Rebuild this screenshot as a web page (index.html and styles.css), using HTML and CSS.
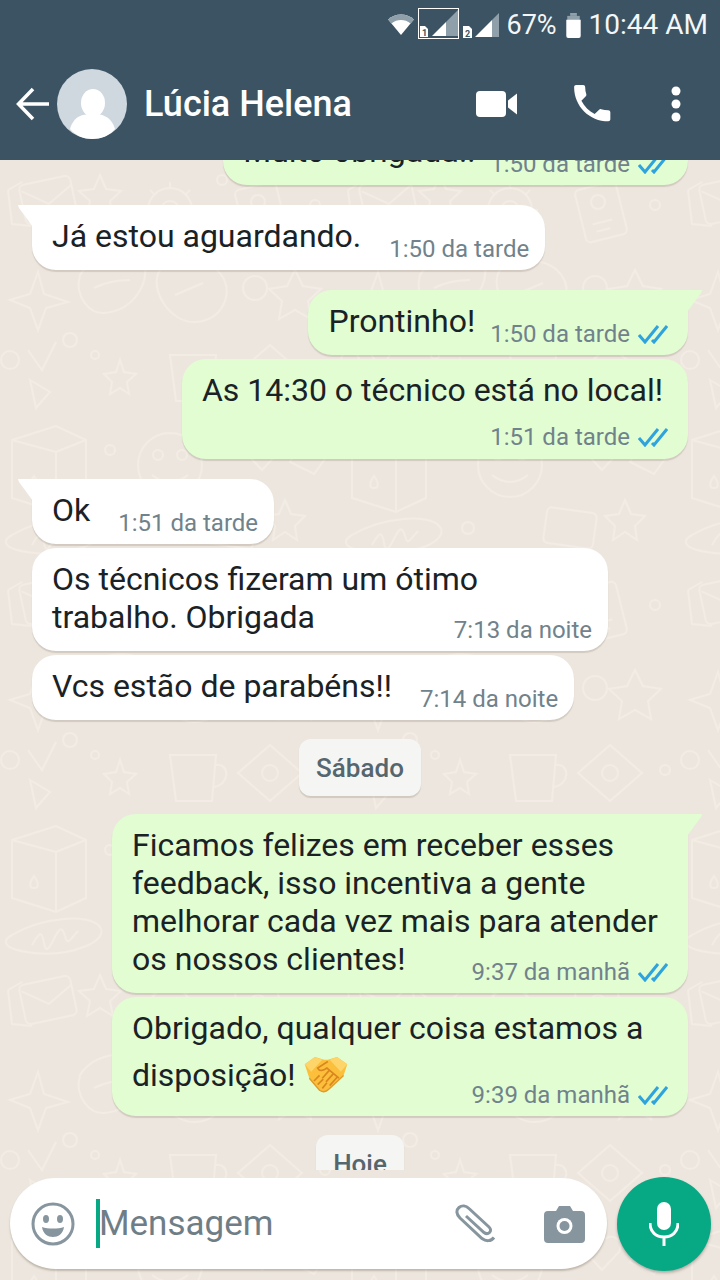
FILE: index.html
```html
<!DOCTYPE html>
<html>
<head lang="en">
    <meta charset="UTF-8">
    <title>Lúcia Helena</title>
    <link rel="stylesheet" href="styles.css">
</head>
<body>
<div class="app">
    <header class="top">
        <div class="status">
            <svg class="st-wifi" width="28" height="22" viewBox="0 0 30 24"><path d="M1 7C9 0 21 0 29 7L15 24Z" fill="#fff"/><path d="M1 7C9 0 21 0 29 7L25.500 11.500C19 6.500 11 6.500 4.500 11.500Z" fill="#8fa0aa"/></svg>
            <div class="sim-box">
                <svg width="39" height="29" viewBox="0 0 39 29"><path d="M1 17h5l3 3v8H1Z" fill="#fff"/><text x="3" y="27" class="sim-num">1</text><path d="M13 27L27 13V27Z" fill="#fff"/><path d="M27 13L39 1V27H27Z" fill="#8fa0aa"/></svg>
            </div>
            <svg class="st-sim2" width="36" height="25" viewBox="0 0 36 25"><path d="M0 13h6l3 3v9H0Z" fill="#fff"/><text x="2" y="24" class="sim-num">2</text><path d="M12 24L29 7V24Z" fill="#fff"/><path d="M29 7L36 0V24H29Z" fill="#8fa0aa"/></svg>
            <span class="st-text pct">67%</span>
            <svg class="st-batt" width="15" height="25" viewBox="0 0 15 26"><path d="M4 0h7v3H4Z" fill="#8fa0aa"/><path d="M1 3h13v5H1Z" fill="#8fa0aa"/><path d="M0 7h15v17a2 2 0 0 1-2 2H2a2 2 0 0 1-2-2Z" fill="#fff"/></svg>
            <span class="st-text">10:44 AM</span>
        </div>
        <div class="bar">
            <svg class="back" width="34" height="34" viewBox="0 0 34 34"><path d="M33 17H3M17 2L2.500 17L17 32" fill="none" stroke="#fff" stroke-width="3.500"/></svg>
            <div class="avatar">
                <svg width="70" height="70" viewBox="0 0 70 70"><circle cx="35" cy="35" r="35" fill="#cfd8df"/><ellipse cx="36" cy="34" rx="12" ry="14" fill="#fff"/><path d="M13 60C17 46 27 45 36 45C45 45 54 47 58 60C52 67 44 70 35 70C27 70 19 67 13 60Z" fill="#fff"/></svg>
            </div>
            <div class="name">Lúcia Helena</div>
            <div class="actions">
                <svg width="42" height="28" viewBox="0 0 42 28"><rect x="0" y="1" width="30" height="26" rx="4" fill="#fff"/><path d="M32 10.500L41 3.500V24.500L32 17.500Z" fill="#fff"/></svg>
                <svg width="46" height="46" viewBox="0 0 24 24"><path d="M6.620 10.790c1.440 2.830 3.760 5.140 6.590 6.590l2.200-2.200c.27-.27.670-.36 1.020-.24 1.120.37 2.330.57 3.570.57.550 0 1 .45 1 1V20c0 .55-.45 1-1 1-9.390 0-17-7.610-17-17 0-.55.45-1 1-1h3.500c.55 0 1 .45 1 1 0 1.250.2 2.450.57 3.570.11.350.03.740-.25 1.020z" fill="#fff" transform="translate(-1 -1) scale(1.050)"/></svg>
                <svg width="12" height="36" viewBox="0 0 12 36"><circle cx="6" cy="5" r="4.500" fill="#fff"/><circle cx="6" cy="18" r="4.500" fill="#fff"/><circle cx="6" cy="31" r="4.500" fill="#fff"/></svg>
            </div>
        </div>
    </header>

    <div class="chat">
        <svg class="doodles" width="720" height="1120">
            <defs>
                <pattern id="dood" width="340" height="400" patternUnits="userSpaceOnUse">
                    <g fill="none" stroke="#f2ece5" stroke-width="2">
                        <!-- envelope -->
                        <rect x="22" y="20" width="52" height="40" rx="5" transform="rotate(-12 48 40)"/>
                        <path d="M24 26l24 18 26-14" transform="rotate(-12 48 40)"/>
                        <path d="M8 30l14-8M8 30l4 34 20 2"/>
                        <!-- star, gear, dots -->
                        <path d="M100 15l6 14 15 2-11 10 3 15-13-8-13 8 3-15-11-10 15-2z"/>
                        <circle cx="170" cy="50" r="22"/>
                        <circle cx="170" cy="50" r="9"/>
                        <path d="M170 22v6M170 72v6M142 50h6M192 50h6M150 30l4 4M186 66l4 4M150 70l4-4M186 34l4-4"/>
                        <circle cx="222" cy="20" r="5"/>
                        <circle cx="132" cy="78" r="4"/>
                        <!-- note -->
                        <rect x="240" y="25" width="42" height="54" rx="5" transform="rotate(-14 261 52)"/>
                        <circle cx="258" cy="42" r="7"/>
                        <path d="M250 62h20M252 70h14" transform="rotate(-14 261 52)"/>
                        <circle cx="315" cy="45" r="5"/>
                        <!-- leaf / cloud -->
                        <path d="M80 115c14-22 48-26 64-14 6 24-12 50-40 52-14 1-30-16-24-38z"/>
                        <path d="M94 128c12-6 24-8 36-8"/>
                        <path d="M160 110c20-14 50-12 62 6s0 44-26 46-48-34-36-52z"/>
                        <path d="M175 135l28-12"/>
                        <!-- plane star -->
                        <path d="M38 112l6 22 24 8-22 6-8 22-8-22-20-8 20-6z"/>
                        <circle cx="255" cy="128" r="12"/>
                        <path d="M295 110l8 16 18 3-13 12 3 18-16-9-16 9 3-18-13-12 18-3z"/>
                        <!-- small -->
                        <circle cx="10" cy="200" r="9"/>
                        <path d="M28 190l14 20 14-28M30 220l20 12-14 16z"/>
                        <circle cx="70" cy="180" r="7"/>
                        <circle cx="95" cy="195" r="4"/>
                        <path d="M120 200l4 12 12 2-9 8 2 12-9-6-10 6 2-12-8-8 12-2z"/>
                        <!-- cup -->
                        <path d="M170 195h46l-4 46h-36z"/>
                        <path d="M216 205c14-2 14 20-2 22"/>
                        <!-- diamond -->
                        <path d="M270 185l32 28-32 28-32-28z"/>
                        <circle cx="270" cy="213" r="8"/>
                        <circle cx="325" cy="210" r="5"/>
                        <!-- box -->
                        <path d="M12 280l44-14 30 14v58l-30 14-44-14zM12 280l44 12 30-12M56 292v60"/>
                        <path d="M34 316c-5 7-5 12 0 12s5-5 0-12z"/>
                        <circle cx="110" cy="290" r="5"/>
                        <!-- face -->
                        <circle cx="170" cy="305" r="32"/>
                        <circle cx="158" cy="295" r="5"/>
                        <circle cx="182" cy="295" r="5"/>
                        <path d="M152 315q18 14 36 0"/>
                        <!-- heart -->
                        <path d="M262 282c-7-11-24-3-17 10l17 18 17-18c7-13-10-21-17-10z"/>
                        <path d="M306 270l24 22-16 22-24-12z"/>
                        <!-- scribble -->
                        <path d="M12 375c30-18 78-22 88-8s-30 30-66 26-30-14-22-18z"/>
                        <path d="M32 385c8-14 10-14 12-2s6 4 12-8 8-2 10 4 6-2 12-8"/>
                        <circle cx="128" cy="368" r="6"/>
                        <rect x="205" y="350" width="50" height="36" rx="5" transform="rotate(8 230 368)"/>
                        <path d="M285 340l6 14 14 2-10 10 2 14-12-8-12 8 2-14-10-10 14-2z"/>
                    </g>
                </pattern>
            </defs>
            <rect width="720" height="1120" fill="url(#dood)"/>
        </svg>

        <div class="messages">
            <div class="msg sent">
                <div class="row">
                    <div class="txt">Muito obrigada!!</div>
                    <div class="meta">1:50 da tarde <svg class="ticks" width="30" height="20" viewBox="0 0 30 20"><path d="M1 11l6 7L20 2M14 16l2 2L29 2" fill="none" stroke="#2fa3dd" stroke-width="3"/></svg></div>
                </div>
            </div>

            <div class="msg recv tail group">
                <div class="row">
                    <div class="txt">Já estou aguardando.</div>
                    <div class="meta">1:50 da tarde</div>
                </div>
            </div>

            <div class="msg sent tail group">
                <div class="row">
                    <div class="txt">Prontinho!</div>
                    <div class="meta">1:50 da tarde <svg class="ticks" width="30" height="20" viewBox="0 0 30 20"><path d="M1 11l6 7L20 2M14 16l2 2L29 2" fill="none" stroke="#2fa3dd" stroke-width="3"/></svg></div>
                </div>
            </div>
            <div class="msg sent roomy">
                <div class="txt">As 14:30 o técnico está no local!</div>
                <div class="meta below">1:51 da tarde <svg class="ticks" width="30" height="20" viewBox="0 0 30 20"><path d="M1 11l6 7L20 2M14 16l2 2L29 2" fill="none" stroke="#2fa3dd" stroke-width="3"/></svg></div>
            </div>

            <div class="msg recv tail group">
                <div class="row">
                    <div class="txt">Ok</div>
                    <div class="meta">1:51 da tarde</div>
                </div>
            </div>
            <div class="msg recv">
                <div class="txt">Os técnicos fizeram um ótimo trabalho. Obrigada<span class="meta over">7:13 da noite</span></div>
            </div>
            <div class="msg recv">
                <div class="row">
                    <div class="txt">Vcs estão de parabéns!!</div>
                    <div class="meta">7:14 da noite</div>
                </div>
            </div>

            <div class="date">Sábado</div>

            <div class="msg sent tail">
                <div class="txt">Ficamos felizes em receber esses feedback, isso incentiva a gente melhorar cada vez mais para atender os nossos clientes!<span class="meta over">9:37 da manhã <svg class="ticks" width="30" height="20" viewBox="0 0 30 20"><path d="M1 11l6 7L20 2M14 16l2 2L29 2" fill="none" stroke="#2fa3dd" stroke-width="3"/></svg></span></div>
            </div>
            <div class="msg sent">
                <div class="txt">Obrigado, qualquer coisa estamos a disposição! <svg class="shake" width="46" height="37" viewBox="0 0 48 40">
                        <path d="M1 9L12 1L22 4L26 4L36 1L47 9L43 21L27 36C24 39 20 39 17 37L6 24Z" fill="#fbbf3c"/>
                        <path d="M1 9L12 1L20 4L8 17ZM47 9L36 1L28 4L40 17Z" fill="#fdd56a"/>
                        <path d="M26 6L15 13C17 17 21 16 25 13L38 24M32 19L24 28M36 23L28 32M28 15L20 24" fill="none" stroke="#d9861e" stroke-width="1.800"/>
                        <path d="M11 27L17 21M15 31L21 25M20 35L25 29" fill="none" stroke="#d9861e" stroke-width="1.800"/>
                        <path d="M6 24L17 37C20 39 24 39 27 36L43 21" fill="none" stroke="#e09a2a" stroke-width="1.500"/>
                    </svg><span class="meta over low">9:39 da manhã <svg class="ticks" width="30" height="20" viewBox="0 0 30 20"><path d="M1 11l6 7L20 2M14 16l2 2L29 2" fill="none" stroke="#2fa3dd" stroke-width="3"/></svg></span></div>
            </div>

            <div class="date">Hoje</div>
        </div>

        <div class="composer">
            <div class="input">
                <svg class="ic-smile" width="44" height="44" viewBox="0 0 44 44"><circle cx="22" cy="22" r="20" fill="none" stroke="#86959e" stroke-width="3"/><ellipse cx="15" cy="17" rx="3" ry="4" fill="#86959e"/><ellipse cx="29" cy="17" rx="3" ry="4" fill="#86959e"/><path d="M11 25c6 2 16 2 22 0c-1 7-6 10-11 10s-10-3-11-10z" fill="#86959e"/></svg>
                <span class="caret"></span>
                <span class="hint">Mensagem</span>
                <svg class="ic-clip" width="44" height="40" viewBox="0 0 44 40"><path d="M40 33.500c-3 4-8 4-12 1L6 14C2 10 2 6 5 3.500s7-2 10 1L35 23c2 2 2 4 .5 5.500s-3.500 1.500-5.500 0L12 12" fill="none" stroke="#86959e" stroke-width="3"/></svg>
                <svg class="ic-cam" width="41" height="38" viewBox="0 0 41 38"><path d="M4 6h8l3-5h11l3 5h8a4 4 0 0 1 4 4v24a4 4 0 0 1-4 4H4a4 4 0 0 1-4-4V10a4 4 0 0 1 4-4Z" fill="#86959e"/><circle cx="20.500" cy="21" r="8" fill="#fff"/><circle cx="20.500" cy="21" r="5" fill="#86959e"/></svg>
            </div>
            <div class="mic">
                <svg width="30" height="44" viewBox="0 0 30 44"><rect x="8" y="0" width="14" height="28" rx="7" fill="#fff"/><path d="M1 21c0 9 6 14 14 14s14-5 14-14M15 35v9" fill="none" stroke="#fff" stroke-width="3"/></svg>
            </div>
        </div>
    </div>
</div>
</body>
</html>
```

FILE: styles.css
```css
*{
    margin: 0;
    padding: 0;
    box-sizing: border-box;
}
html,body{
    width: 100%;
    height: 100%;
    overflow: hidden;
}
body{
    font-family: Roboto, "Liberation Sans", sans-serif;
    color: #1a2226;
}
.app{
    width: 720px;
    height: 1280px;
    display: flex;
    flex-direction: column;
}

/* top */
.top{
    height: 160px;
    background-color: #3b5363;
    color: #fff;
    flex: none;
}
.status{
    height: 50px;
    display: flex;
    align-items: center;
    justify-content: flex-end;
    padding-right: 12px;
}
.st-wifi{
    margin-right: 3px;
    margin-bottom: 2px;
}
.sim-box{
    width: 41px;
    height: 31px;
    border: 1px solid #fff;
    margin-right: 4px;
    margin-bottom: 3px;
}
.sim-box svg{
    display: block;
}
.sim-num{
    font-size: 9px;
    font-weight: 700;
    fill: #3b5363;
}
.st-sim2{
    margin-right: 7px;
}
.st-text{
    font-size: 28px;
    line-height: 32px;
    color: #f4f6f7;
}
.pct{
    font-size: 27px;
    margin-right: 9px;
}
.st-batt{
    margin-right: 8px;
}
.bar{
    height: 110px;
    display: flex;
    align-items: center;
    padding: 0 0 2px 16px;
}
.back{
    flex: none;
}
.avatar{
    width: 70px;
    height: 70px;
    margin-left: 7px;
    flex: none;
}
.name{
    margin-left: 17px;
    font-size: 36px;
    font-weight: 500;
    white-space: nowrap;
}
.actions{
    margin-left: auto;
    display: flex;
    align-items: center;
    padding-right: 38px;
}
.actions svg:nth-child(2){
    margin-left: 52px;
}
.actions svg:nth-child(3){
    margin-left: 54px;
}

/* chat */
.chat{
    flex: 1;
    position: relative;
    display: flex;
    flex-direction: column;
    background-color: #ede6de;
    min-height: 0;
}
.doodles{
    position: absolute;
    left: 0;
    top: 0;
}
.messages{
    position: relative;
    height: 1010px;
    overflow: hidden;
    display: flex;
    flex-direction: column;
    align-items: flex-start;
    padding: 0 32px;
    flex: none;
}
.messages > :first-child{
    margin-top: -40px;
}
.msg{
    position: relative;
    display: flow-root;
    flex: none;
    margin-top: 4px;
    max-width: 576px;
    padding: 12px 20px 5px;
    border-radius: 24px;
    background-color: #fff;
    box-shadow: 0 2px 1px rgba(90,80,60,.18);
}
.msg.sent{
    align-self: flex-end;
    background-color: #e2fdd2;
}
.msg.roomy{
    padding-right: 25px;
}
.msg.group{
    margin-top: 20px;
}
.msg.recv.tail{
    border-top-left-radius: 0;
}
.msg.sent.tail{
    border-top-right-radius: 0;
}
.msg.tail::before{
    content: "";
    position: absolute;
    top: 0;
    width: 15px;
    height: 22px;
    background-color: inherit;
}
.msg.recv.tail::before{
    left: -14px;
    clip-path: polygon(0 0, 100% 0, 100% 100%, 1px 3px);
}
.msg.sent.tail::before{
    right: -14px;
    clip-path: polygon(0 0, 100% 0, calc(100% - 1px) 3px, 0 100%);
}
.row{
    display: flex;
    align-items: flex-end;
    gap: 28px;
}
.sent .row{
    gap: 15px;
}
.txt{
    font-size: 32px;
    line-height: 38px;
}
.row .txt{
    margin-bottom: 10px;
    white-space: nowrap;
}
.msg > .txt{
    margin-bottom: 10px;
}
.meta{
    display: flex;
    align-items: center;
    justify-content: flex-end;
    gap: 8px;
    font-size: 24px;
    line-height: 32px;
    color: #70828b;
    white-space: nowrap;
}
.recv .meta{
    margin-right: -4px;
}
.meta.below{
    margin-top: 12px;
    margin-right: -5px;
    margin-bottom: 1px;
}
.meta.over{
    float: right;
    margin-top: 16px;
}
.meta.low{
    margin-top: 32px;
}
.ticks{
    flex: none;
}
.shake{
    vertical-align: -7px;
    margin-top: 9px;
}
.date{
    align-self: center;
    flex: none;
    margin: 19px 0 14px;
    height: 57px;
    padding: 0 17px;
    line-height: 59px;
    border-radius: 12px;
    background-color: #f5f5f3;
    box-shadow: 0 2px 1px rgba(90,80,60,.18);
    font-size: 26px;
    font-weight: 500;
    color: #56666f;
}

/* bottom */
.composer{
    position: relative;
    flex: 1;
    display: flex;
    align-items: center;
    padding: 0 9px 3px 10px;
    gap: 10px;
}
.input{
    flex: 1;
    height: 91px;
    border-radius: 46px;
    background-color: #fff;
    box-shadow: 0 2px 2px rgba(90,80,60,.3);
    display: flex;
    align-items: center;
    padding-left: 21px;
}
.caret{
    width: 4px;
    height: 49px;
    margin-left: 21px;
    background-color: #07a884;
}
.hint{
    font-size: 35px;
    margin-left: -1px;
    color: #6f7e86;
    flex: 1;
}
.ic-clip{
    margin-right: 46px;
}
.ic-cam{
    margin-right: 22px;
}
.mic{
    width: 94px;
    height: 94px;
    border-radius: 50%;
    background-color: #07a884;
    box-shadow: 0 2px 3px rgba(0,0,0,.25);
    display: flex;
    align-items: center;
    justify-content: center;
    flex: none;
}
```
